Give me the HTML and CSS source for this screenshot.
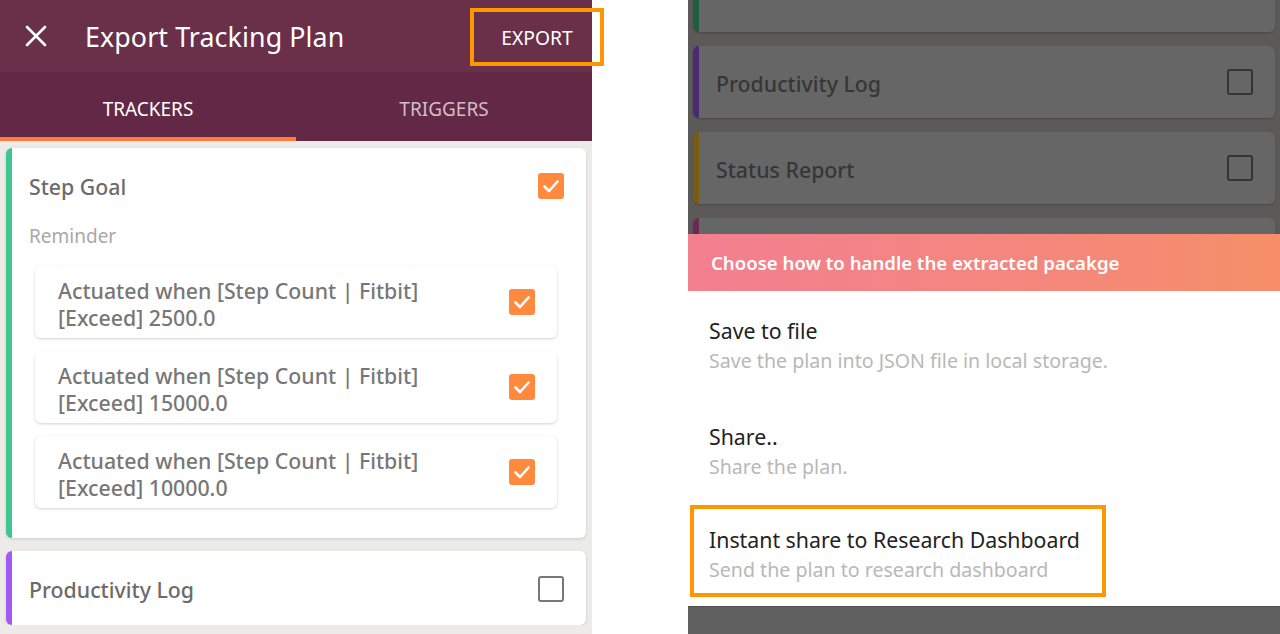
FILE: index.html
```html
<!DOCTYPE html>
<html>
<head>
<meta charset="utf-8">
<link rel="stylesheet" href="styles.css">
</head>
<body>
<div class="page">
  <section class="left">
    <header class="appbar">
      <div class="close">
        <svg width="22" height="22" viewBox="0 0 22 22"><path d="M2 2 L20 20 M20 2 L2 20" stroke="#fff" stroke-width="2.6" stroke-linecap="round"/></svg>
      </div>
      <div class="title">Export Tracking Plan</div>
      <div class="export">EXPORT</div>
    </header>
    <nav class="tabs">
      <div class="tab active">TRACKERS</div>
      <div class="tab">TRIGGERS</div>
    </nav>
    <div class="content">
      <div class="card green">
        <div class="row">
          <div class="name">Step Goal</div>
          <span class="cb on"><svg width="26" height="26" viewBox="0 0 26 26"><path d="M6.5 13.5 L11 18 L19.5 8.5" fill="none" stroke="#fff" stroke-width="2.6" stroke-linecap="round" stroke-linejoin="round"/></svg></span>
        </div>
        <div class="sub">Reminder</div>
        <div class="trig">
          <div class="ttext">Actuated when [Step Count | Fitbit]<br>[Exceed] 2500.0</div>
          <span class="cb on"><svg width="26" height="26" viewBox="0 0 26 26"><path d="M6.5 13.5 L11 18 L19.5 8.5" fill="none" stroke="#fff" stroke-width="2.6" stroke-linecap="round" stroke-linejoin="round"/></svg></span>
        </div>
        <div class="trig">
          <div class="ttext">Actuated when [Step Count | Fitbit]<br>[Exceed] 15000.0</div>
          <span class="cb on"><svg width="26" height="26" viewBox="0 0 26 26"><path d="M6.5 13.5 L11 18 L19.5 8.5" fill="none" stroke="#fff" stroke-width="2.6" stroke-linecap="round" stroke-linejoin="round"/></svg></span>
        </div>
        <div class="trig">
          <div class="ttext">Actuated when [Step Count | Fitbit]<br>[Exceed] 10000.0</div>
          <span class="cb on"><svg width="26" height="26" viewBox="0 0 26 26"><path d="M6.5 13.5 L11 18 L19.5 8.5" fill="none" stroke="#fff" stroke-width="2.6" stroke-linecap="round" stroke-linejoin="round"/></svg></span>
        </div>
      </div>
      <div class="card purple single">
        <div class="row">
          <div class="name">Productivity Log</div>
          <span class="cb off"></span>
        </div>
      </div>
    </div>
  </section>

  <div class="spacer"></div>

  <section class="right">
    <div class="dim">
      <div class="dcard dgreen top"><div class="dinner"></div></div>
      <div class="dcard dpurple"><div class="dname">Productivity Log</div><span class="dcb"></span></div>
      <div class="dcard dbrown"><div class="dname">Status Report</div><span class="dcb"></span></div>
      <div class="dcard dpink"></div>
    </div>
    <div class="sheet">
      <div class="sheet-head">Choose how to handle the extracted pacakge</div>
      <div class="options">
        <div class="opt">
          <div class="otitle">Save to file</div>
          <div class="odesc">Save the plan into JSON file in local storage.</div>
        </div>
        <div class="opt">
          <div class="otitle">Share..</div>
          <div class="odesc">Share the plan.</div>
        </div>
        <div class="opt highlight">
          <div class="otitle">Instant share to Research Dashboard</div>
          <div class="odesc">Send the plan to research dashboard</div>
        </div>
      </div>
    </div>
    <div class="navbar"></div>
  </section>
</div>
</body>
</html>
```

FILE: styles.css
```css
* { box-sizing: border-box; }
html, body { margin: 0; padding: 0; background: #fff; }
body {
  width: 1280px;
  height: 634px;
  overflow: hidden;
  font-family: "Noto Sans", "Open Sans", sans-serif;
}
.page { display: flex; height: 634px; }

/* LEFT */
.left {
  width: 592px;
  height: 634px;
  background: #edebe8;
  display: flex;
  flex-direction: column;
  position: relative;
  z-index: 2;
}
.appbar {
  height: 72px;
  background: #6a304a;
  display: flex;
  align-items: center;
  position: relative;
  color: #fff;
}
.close { width: 85px; padding-left: 25px; display: flex; align-items: center; }
.title { font-size: 26.8px; flex: 1; letter-spacing: 0.1px; }
.export {
  font-size: 19.3px;
  width: 134px;
  height: 58px;
  margin-right: -12px;
  margin-top: 2px;
  border: 4px solid #ff9800;
  display: flex;
  align-items: center;
  justify-content: center;
  padding-right: 0;
  position: relative;
  z-index: 2;
}
.tabs {
  height: 69px;
  background: #632845;
  display: flex;
}
.tab {
  flex: 1;
  display: flex;
  align-items: center;
  justify-content: center;
  font-size: 19px;
  color: #d4bcc8;
  padding-top: 4px;
}
.tab.active { color: #fff; border-bottom: 4px solid #ff7a3f; padding-top: 8px; }

.content { padding: 7px 6px 0 6px; display: flex; flex-direction: column; gap: 13px; overflow: hidden; }
.card {
  background: #fff;
  border-radius: 6px;
  border-left: 6px solid #3cc690;
  box-shadow: 0 1px 3px rgba(0,0,0,0.14);
  padding: 12px 22px 30px 17px;
}
.card.purple { border-left-color: #a25af2; }
.card.single { padding-top: 12px; padding-bottom: 10px; }
.row { display: flex; align-items: center; justify-content: space-between; height: 52px; }
.name { font-size: 21.3px; font-weight: 500; color: #6b6b6b; }
.sub { font-size: 19px; color: #a8a8a8; height: 28px; line-height: 28px; margin: 10px 0 16px; }
.trig {
  margin: 0 7px 13px 6px;
  height: 72px;
  background: #fff;
  border-radius: 6px;
  box-shadow: 0 1px 3px rgba(0,0,0,0.18);
  display: flex;
  align-items: center;
  justify-content: space-between;
  padding: 0 22px 0 23px;
}
.trig:last-child { margin-bottom: 0; }
.ttext { font-size: 21.3px; line-height: 27px; font-weight: 500; color: #777; margin-top: 4px; }
.cb { width: 26px; height: 26px; border-radius: 3px; display: block; flex: none; }
.cb svg { display: block; }
.cb.on { background: #ff8a3d; }
.cb.off { border: 2.5px solid #777; }

.spacer { width: 96px; background: #fff; }

/* RIGHT */
.right {
  width: 592px;
  height: 634px;
  display: flex;
  flex-direction: column;
  overflow: hidden;
}
.dim {
  height: 234px;
  flex: none;
  background: #5b5a59;
  padding: 0 5px 0 5px;
  display: flex;
  flex-direction: column;
  gap: 14px;
  overflow: hidden;
}
.dcard {
  flex: none;
  height: 72px;
  background: #666;
  border-radius: 6px;
  border-left: 6px solid #1f5d44;
  box-shadow: 0 1px 2px rgba(0,0,0,0.2);
  display: flex;
  align-items: center;
  justify-content: space-between;
  padding: 0 22px 0 17px;
}
.dcard.top { height: 72px; margin-top: -40px; position: relative; }
.dinner {
  position: absolute;
  left: 23px;
  right: 27px;
  top: -30px;
  height: 33px;
  border-radius: 6px;
  background: #666;
  box-shadow: 0 1px 2px rgba(0,0,0,0.25);
}
.dpurple { border-left-color: #4b2a74; }
.dbrown { border-left-color: #7a5b12; }
.dpink { border-left-color: #6b2a52; }
.dname { font-size: 21.3px; font-weight: 500; color: #363636; margin-top: 2px; }
.dcb { width: 26px; height: 26px; border: 2.5px solid #333; border-radius: 3px; display: block; }

.sheet { background: #fff; flex: 1; display: flex; flex-direction: column; }
.sheet-head {
  height: 57px;
  background: linear-gradient(90deg, #f37f90 0%, #f4877c 60%, #f58f68 100%);
  color: #fff;
  font-size: 18.6px;
  font-weight: 600;
  display: flex;
  align-items: center;
  padding-left: 23px;
}
.options { padding-top: 18px; display: flex; flex-direction: column; }
.opt { height: 106px; padding: 7px 0 0 21px; }
.otitle { font-size: 21.3px; color: #222; line-height: 30px; }
.odesc { font-size: 19.6px; color: #b8b8b8; line-height: 30px; }
.opt.highlight {
  height: 92px;
  width: 416px;
  margin-left: 2px;
  margin-top: -16px;
  border: 4px solid #ff9800;
  padding: 16px 0 0 15px;
}
.navbar { height: 28px; flex: none; background: #616161; border-top: 1px solid #4e4e4e; margin-top: auto; }
```
